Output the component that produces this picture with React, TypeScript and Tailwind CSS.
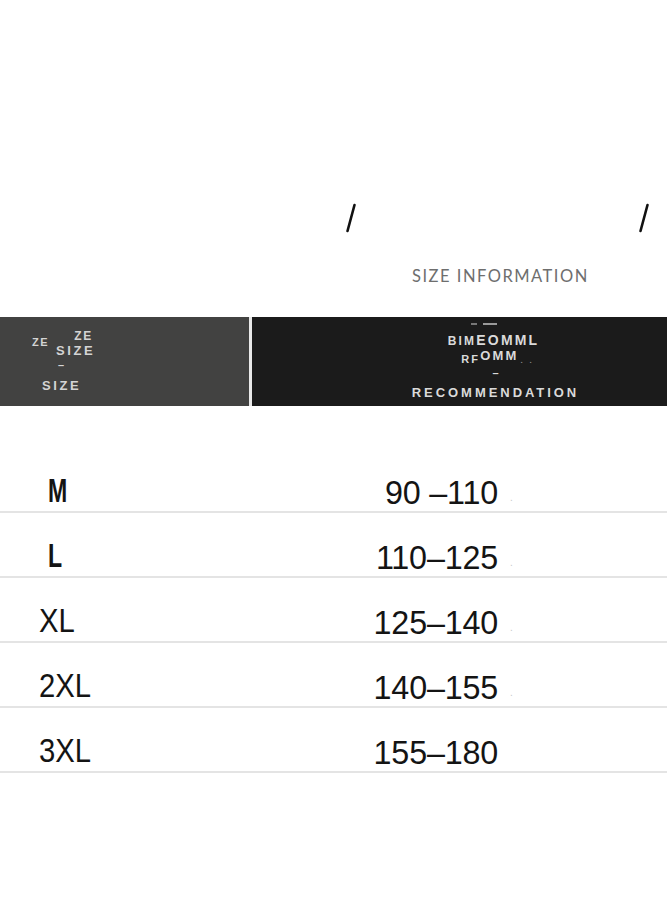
const rows = [
  { size: "M", range: "90\u00a0–110", dot: true, indent: true },
  { size: "L", range: "110–125", dot: true, indent: true },
  { size: "XL", range: "125–140", dot: true, indent: false },
  { size: "2XL", range: "140–155", dot: true, indent: false },
  { size: "3XL", range: "155–180", dot: false, indent: false },
];

const Slash = () => (
  <svg width="12" height="30" viewBox="0 0 12 30" className="block">
    <line x1="9.5" y1="2" x2="2.5" y2="28" stroke="#111" strokeWidth="2.6" strokeLinecap="round" />
  </svg>
);

const App = () => {
  return (
    <div className="w-[667px] h-[910px] bg-white flex flex-col overflow-hidden" style={{ fontFamily: '"Liberation Sans", Arial, sans-serif' }}>
      {/* title area */}
      <div className="h-[317px] flex flex-col pt-[203px]">
        <div className="flex h-[30px] pl-[345px]">
          <Slash />
          <div className="ml-[281px]">
            <Slash />
          </div>
        </div>
        <div className="mt-[35px] pl-[412px] text-[16.5px] leading-none tracking-[1.5px] text-[#6e6e6e]" style={{ fontFamily: 'Lato, "Open Sans", sans-serif' }}>
          SIZE INFORMATION
        </div>
      </div>

      {/* header bar */}
      <div className="h-[89px] flex">
        <div className="w-[249px] bg-[#424241] flex flex-col pl-[32px] pt-[13px] text-[#d4d4d4] font-bold">
          <div className="flex items-start h-[26px]">
            <span className="text-[11px] leading-none tracking-[1.5px] mt-[7px]">ZE</span>
            <span className="text-[13px] leading-none tracking-[2.6px] mt-[14px] ml-[7px]">SIZE</span>
            <span className="text-[12px] leading-none tracking-[1.5px] -ml-[21px]">ZE</span>
          </div>
          <div className="pl-[26px] text-[11px] leading-none mt-[4px]">–</div>
          <div className="pl-[10px] text-[13px] leading-none tracking-[2.6px] mt-[8px]">SIZE</div>
        </div>
        <div className="w-[3px] bg-[#e9e9e9]" />
        <div className="flex-1 bg-[#1b1b1b] flex flex-col items-center pl-[72px] text-[#dadada] font-bold">
          <div className="h-[14px] flex items-center gap-[6px] -ml-[24px]">
            <span className="w-[6px] h-[2px] bg-[#777]" />
            <span className="w-[14px] h-[2px] bg-[#999]" />
          </div>
          <div className="flex items-end leading-none h-[16px] tracking-[2.2px] -ml-[4px]">
            <span className="text-[12px]">BIM</span>
            <span className="text-[14px]">EOMML</span>
          </div>
          <div className="flex items-end leading-none h-[18px] tracking-[2.2px] ml-[4px]">
            <span className="text-[11px]">RF</span>
            <span className="text-[13px] mb-[3px]">OMM</span>
            <span className="text-[8px] text-[#888] ml-[2px]">. .</span>
          </div>
          <div className="text-[11px] leading-none mt-[3px]">–</div>
          <div className="text-[13px] leading-none tracking-[2.95px] mt-[7px]">RECOMMENDATION</div>
        </div>
      </div>

      {/* rows */}
      <div className="flex flex-col">
        {rows.map((r, i) => (
          <div key={r.size}>
            <div className={`${i === 0 ? "h-[105px]" : "h-[63px]"} flex items-end pb-[2px] text-[#141414]`}>
              <div className={`w-[248px] ${r.indent ? "pl-[48px]" : "pl-[39px]"}`}>
                <span className={`inline-block origin-left text-[34px] leading-none ${r.indent ? "font-bold scale-x-[0.68]" : "scale-x-[0.86]"}`}>
                  {r.size}
                </span>
              </div>
              <div className="w-[250px] text-right text-[34px] leading-none tracking-[-0.2px] origin-right scale-x-[0.95]">{r.range}</div>
              {r.dot && <span className="ml-[12px] mb-[6px] text-[10px] leading-none text-[#c8c8c8]">.</span>}
            </div>
            <div className="h-[2px] bg-[#e4e4e4]" />
          </div>
        ))}
      </div>
    </div>
  );
};

export default App;
